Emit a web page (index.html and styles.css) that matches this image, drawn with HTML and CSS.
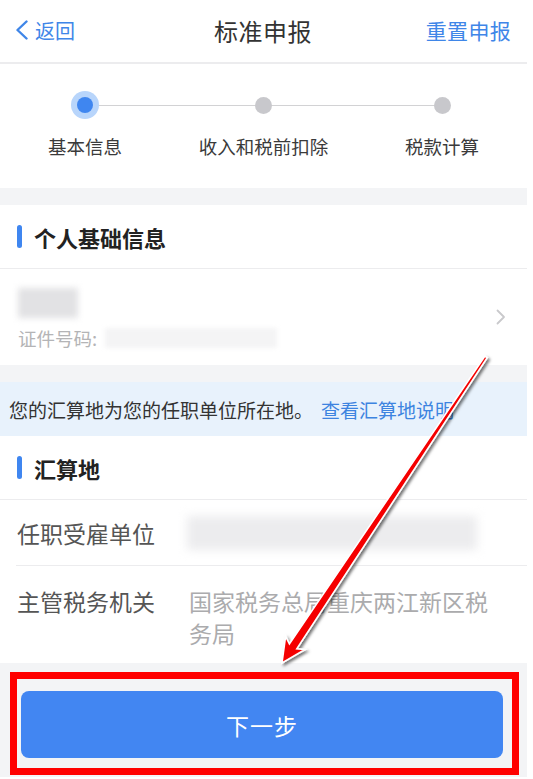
FILE: index.html
```html
<!DOCTYPE html>
<html lang="zh-CN">
<head>
<meta charset="utf-8">
<title>标准申报</title>
<link rel="stylesheet" href="styles.css">
</head>
<body>
<div class="app">
  <header class="header">
    <div class="back">
      <svg class="back-icon" width="14" height="20" viewBox="0 0 14 20"><polyline points="11.5,1.5 2.5,10 11.5,18.5" fill="none" stroke="#3f86e8" stroke-width="2.4" stroke-linecap="round" stroke-linejoin="round"/></svg>
      <span>返回</span>
    </div>
    <div class="title">标准申报</div>
    <div class="reset">重置申报</div>
  </header>

  <section class="steps">
    <div class="step active">
      <div class="track"><span class="dot"></span></div>
      <div class="label">基本信息</div>
    </div>
    <div class="step">
      <div class="track"><span class="dot"></span></div>
      <div class="label">收入和税前扣除</div>
    </div>
    <div class="step last">
      <div class="track"><span class="dot"></span></div>
      <div class="label">税款计算</div>
    </div>
  </section>

  <div class="gap"></div>

  <section class="card">
    <div class="card-title"><span class="bar"></span>个人基础信息</div>
    <div class="person">
      <div class="person-info">
        <div class="name-blur"></div>
        <div class="id-line"><span>证件号码:</span><span class="id-blur"></span></div>
      </div>
      <svg class="chev" width="10" height="16" viewBox="0 0 10 16"><polyline points="1.5,1.5 8,8 1.5,14.5" fill="none" stroke="#c9c9cc" stroke-width="1.8" stroke-linecap="round" stroke-linejoin="round"/></svg>
    </div>
  </section>

  <div class="gap"></div>

  <div class="notice">您的汇算地为您的任职单位所在地。<span class="link">查看汇算地说明</span></div>

  <section class="card">
    <div class="card-title"><span class="bar"></span>汇算地</div>
    <div class="row first">
      <div class="row-label">任职受雇单位</div>
      <div class="row-value"><div class="company-blur"></div></div>
    </div>
    <div class="row tall">
      <div class="row-label">主管税务机关</div>
      <div class="row-value">国家税务总局重庆两江新区税务局</div>
    </div>
  </section>

  <footer class="footer">
    <div class="highlight">
      <button class="next">下一步</button>
    </div>
  </footer>
</div>

<svg class="arrow" width="533" height="779" viewBox="0 0 533 779">
  <defs>
    <filter id="sh" x="-20%" y="-20%" width="140%" height="140%">
      <feDropShadow dx="2" dy="2" stdDeviation="1.5" flood-color="#000" flood-opacity="0.55"/>
    </filter>
  </defs>
  <polygon filter="url(#sh)" points="484.8,356.2 487.2,357.8 296.8,648.9 305,649.5 282,663 285.6,636.5 289.4,643.9" fill="#f50000" stroke="#ffffff" stroke-width="1.6" stroke-linejoin="miter"/>
</svg>
</body>
</html>
```

FILE: styles.css
```css
* { box-sizing: border-box; }
html, body { margin: 0; padding: 0; background: #ffffff; }
body {
  font-family: "Noto Sans CJK SC", "Noto Sans", sans-serif;
  color: #333;
  width: 533px;
  height: 779px;
  overflow: hidden;
  position: relative;
}
.app { width: 527px; background: #ffffff; }

.header {
  height: 64px;
  display: grid;
  grid-template-columns: 1fr auto 1fr;
  align-items: center;
  padding: 0 16px 2px 15px;
  border-bottom: 2px solid #ececee;
}
.back { display: flex; align-items: center; gap: 6px; color: #3f86e8; font-size: 20px; }
.back-icon { display: block; }
.title { font-size: 24px; color: #333; letter-spacing: 0.5px; }
.reset { justify-self: end; color: #3f86e8; font-size: 21px; letter-spacing: 0.3px; }

.steps {
  height: 124px;
  display: grid;
  grid-template-columns: repeat(3, 178.5px);
  justify-content: center;
  padding-top: 27px;
}
.step { display: flex; flex-direction: column; align-items: center; }
.track {
  position: relative;
  width: 100%;
  height: 28px;
  display: flex;
  align-items: center;
  justify-content: center;
}
.track::after {
  content: "";
  position: absolute;
  left: 50%;
  width: 100%;
  top: 13.5px;
  height: 1px;
  background: #d2d2d4;
}
.step.last .track::after { display: none; }
.dot {
  position: relative;
  z-index: 1;
  width: 17px;
  height: 17px;
  border-radius: 50%;
  background: #c8c8cc;
}
.step.active .dot {
  width: 16px;
  height: 16px;
  background: #3f86f0;
  box-shadow: 0 0 0 6px #b8d5fb;
}
.label { margin-top: 14px; font-size: 18.5px; line-height: 26px; color: #3a3a3a; white-space: nowrap; }

.gap { height: 17px; background: #f3f4f6; }

.card { background: #ffffff; }
.card-title {
  height: 64px;
  display: flex;
  align-items: center;
  padding-left: 17px;
  font-size: 22px;
  font-weight: bold;
  color: #222;
  border-bottom: 1px solid #ececee;
}
.bar {
  width: 5px;
  height: 23px;
  border-radius: 3px;
  background: #3f86f0;
  margin-right: 12px;
}

.person {
  height: 96px;
  display: flex;
  align-items: center;
  justify-content: space-between;
  padding: 0 21px 0 18px;
}
.person-info { padding-top: 4px; }
.name-blur {
  width: 60px;
  height: 30px;
  background: #e2e2e4;
  filter: blur(3px);
}
.id-line {
  margin-top: 8px;
  display: flex;
  align-items: center;
  font-size: 18.5px;
  line-height: 24px;
  color: #b4b4b6;
}
.id-blur {
  display: block;
  width: 172px;
  height: 20px;
  margin-left: 8px;
  background: #f4f4f5;
  filter: blur(2px);
}
.chev { display: block; }

.notice {
  height: 54px;
  display: flex;
  align-items: center;
  padding-left: 9px;
  background: #e8f2fc;
  font-size: 19px;
  color: #333;
  white-space: nowrap;
}
.link { color: #3d84e0; margin-left: 8px; }

.row {
  margin-left: 16px;
  padding-left: 1px;
  padding-right: 30px;
  display: grid;
  grid-template-columns: 172px 1fr;
  font-size: 23px;
}
.row.first {
  height: 66px;
  align-items: center;
  border-bottom: 1px solid #ececee;
}
.row.tall { padding-top: 19px; padding-bottom: 14px; line-height: 32px; }
.row-label { color: #555; white-space: nowrap; }
.row-value { color: #ababad; }
.company-blur {
  width: 290px;
  height: 34px;
  margin-left: -2px;
  background: #ececee;
  filter: blur(5px);
}

.footer {
  background: #f3f4f6;
  padding: 9px 8px 2px 10px;
}
.highlight {
  border: 7px solid #ff0000;
  padding: 12px 9px 10px 4px;
}
.next {
  display: block;
  width: 100%;
  height: 67px;
  border: none;
  border-radius: 8px;
  background: #4286f2;
  color: #ffffff;
  font-family: "Noto Sans CJK SC", "Noto Sans", sans-serif;
  font-size: 23px;
  letter-spacing: 1px;
}

.arrow { position: absolute; left: 0; top: 0; pointer-events: none; }
```
